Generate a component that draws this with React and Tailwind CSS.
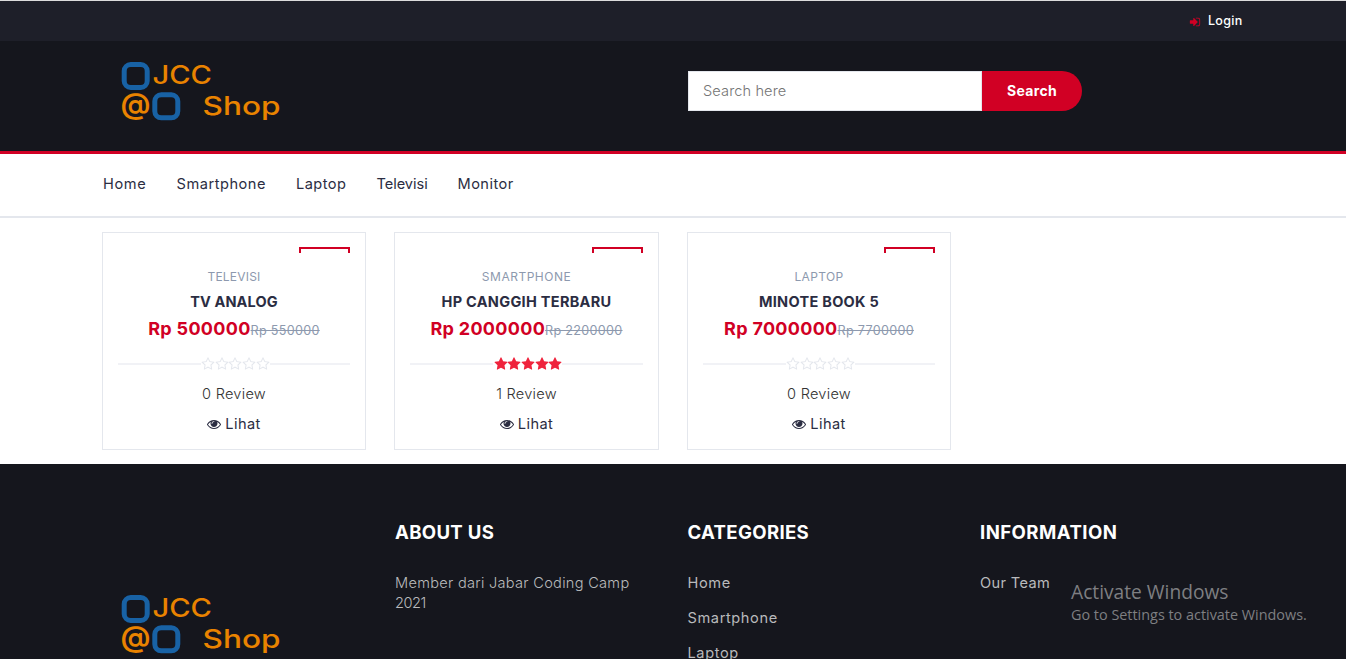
import React from "react";

const ICONS = {
  eye: "M1664 960q-152-236-381-353 61 104 61 225 0 185-131.5 316.5t-316.5 131.5-316.5-131.5-131.5-316.5q0-121 61-225-229 117-381 353 133 205 333.5 326.5t434.5 121.5 434.5-121.5 333.5-326.5zm-720-384q0-20-14-34t-34-14q-125 0-214.5 89.5t-89.5 214.5q0 20 14 34t34 14 34-14 14-34q0-86 61-147t147-61q20 0 34-14t14-34zm848 384q0 34-20 69-140 230-376.5 368.5t-499.5 138.5-499.5-139-376.5-368q-20-35-20-69t20-69q140-229 376.5-368t499.5-139 499.5 139 376.5 368q20 35 20 69z",
  star: "M1728 647q0 22-26 48l-363 354 86 500q1 7 1 20 0 50-41 50-19 0-40-12l-449-236-449 236q-22 12-40 12-21 0-31.5-14.5t-10.5-35.5q0-6 2-20l86-500-364-354q-25-27-25-48 0-37 56-46l502-73 225-455q19-41 49-41t49 41l225 455 502 73q56 9 56 46z",
  starOutline: "M1201 1004l306-297-422-62-189-382-189 382-422 62 306 297-73 421 378-199 377 199zm527-357q0 22-26 48l-363 354 86 500q1 7 1 20 0 50-41 50-19 0-40-12l-449-236-449 236q-22 12-40 12-21 0-31.5-14.5t-10.5-35.5q0-6 2-20l86-500-364-354q-25-27-25-48 0-37 56-46l502-73 225-455q19-41 49-41t49 41l225 455 502 73q56 9 56 46z",
  signIn: "M1312 896q0 26-19 45l-544 544q-19 19-45 19t-45-19-19-45v-288h-448q-26 0-45-19t-19-45v-384q0-26 19-45t45-19h448v-288q0-26 19-45t45-19 45 19l544 544q19 19 19 45zm352-352v704q0 119-84.5 203.5t-203.5 84.5h-320q-13 0-22.5-9.5t-9.5-22.5q0-4-1-20t-.5-26.5 3-23.5 10-19.5 20.5-6.5h320q66 0 113-47t47-113v-704q0-66-47-113t-113-47h-312l-11.5-1-11.5-3-8-5.5-7-9-2-13.5q0-4-1-20t-.5-26.5 3-23.5 10-19.5 20.5-6.5h320q119 0 203.5 84.5t84.5 203.5z",
};

function Icon({ name, size }) {
  return (
    <svg width={size} height={size} viewBox="0 0 1792 1792" fill="currentColor" className="block shrink-0">
      <path d={ICONS[name]} />
    </svg>
  );
}

const navItems = [
  { label: "Home", cls: "w-[43.5px] tracking-[0.6px]" },
  { label: "Smartphone", cls: "w-[89.5px] tracking-[0.52px]" },
  { label: "Laptop", cls: "w-[50.5px] tracking-[0.45px]" },
  { label: "Televisi", cls: "w-[51px] tracking-[-0.05px]" },
  { label: "Monitor", cls: "w-[56px] tracking-[0.45px]" },
];

const products = [
  { category: "TELEVISI", categoryCls: "tracking-[0.2px]", name: "TV ANALOG", nameCls: "tracking-[0.1px]", price: "Rp 500000", old: "Rp 550000", stars: 0, reviews: 0 },
  { category: "SMARTPHONE", categoryCls: "tracking-[0.5px]", name: "HP CANGGIH TERBARU", nameCls: "tracking-[0.3px]", price: "Rp 2000000", old: "Rp 2200000", stars: 5, reviews: 1 },
  { category: "LAPTOP", categoryCls: "tracking-[0.35px]", name: "MINOTE BOOK 5", nameCls: "tracking-[0.3px]", price: "Rp 7000000", old: "Rp 7700000", stars: 0, reviews: 0 },
];

function Logo() {
  return (
    <svg width="170" height="70" viewBox="0 0 170 70" className="block shrink-0" fontFamily="Inter, sans-serif" fill="#e98300">
      <g fill="none" stroke="#1862a5" strokeWidth="5">
        <rect x="6.2" y="8.5" width="23" height="23" rx="6.5" />
        <rect x="36.8" y="38.8" width="23" height="23" rx="6.5" />
      </g>
      <text x="34.5" y="28.2" fontSize="25" fontWeight="500" textLength="59.5" lengthAdjust="spacingAndGlyphs">JCC</text>
      <text x="2.5" y="58" fontSize="29" fontWeight="600" textLength="30" lengthAdjust="spacingAndGlyphs">@</text>
      <text x="84.6" y="59" fontSize="25.5" fontWeight="500" textLength="78" lengthAdjust="spacingAndGlyphs">Shop</text>
    </svg>
  );
}

function Card({ p }) {
  return (
    <div className="relative mx-[15px] flex h-[216px] flex-col items-center bg-white px-[15px] pt-[34px] text-[#2b2d42] shadow-[0_0_0_1px_#e4e7ed]">
      <div className="absolute right-[15px] top-[14px] h-[6px] w-[51px] border-2 border-b-0 border-[#d10024]" />
      <p className={"h-[21px] text-[12px] leading-[19px] text-[#8d99ae] " + p.categoryCls}>{p.category}</p>
      <h3 className={"h-[27px] whitespace-nowrap text-[14.5px] font-bold leading-[28px] " + p.nameCls}>{p.name}</h3>
      <div className="flex h-[27px] items-baseline whitespace-nowrap leading-[27px] tracking-[0.3px] text-[#d10024]">
        <span className="text-[18px] font-bold">{p.price}</span>
        <del className="text-[12.6px] text-[#8d99ae]">{p.old}</del>
      </div>
      <div className="mt-[11px] flex h-[22px] w-full items-center">
        <div className="h-[2px] w-[83px] bg-[#f1f2f6]" />
        <div className={"flex pb-px pl-[0.5px] " + (p.stars ? "text-[#ef233c]" : "text-[#e4e7ed]")}>
          {[0, 1, 2, 3, 4].map((i) => (
            <div key={i} className="flex w-[13.67px] justify-center">
              <Icon name={i < p.stars ? "star" : "starOutline"} size={14} />
            </div>
          ))}
        </div>
        <div className="h-[2px] flex-1 bg-[#f1f2f6]" />
      </div>
      <p className="mt-[9px] h-[20px] text-[14.6px] font-light leading-[20px] tracking-[0.25px] text-[#333333]">{p.reviews} Review</p>
      <a className="mt-[10px] flex h-[20px] items-center gap-[4px] text-[14.6px] leading-[20px] tracking-[0.4px]">
        <Icon name="eye" size={14} />
        <span>Lihat</span>
      </a>
    </div>
  );
}

export default function App() {
  return (
    <div className="flex h-[659px] w-[1346px] flex-col overflow-hidden bg-white font-[Inter,sans-serif] text-[14.6px]">
      <div className="flex h-[41px] shrink-0 items-center border-t border-[#dcdcdc] bg-[#1e1f29] pl-[1189px] pt-px text-[#d10024]">
        <Icon name="signIn" size={12} />
        <span className="ml-[7px] text-[12.5px] font-medium tracking-[0.3px] text-white">Login</span>
      </div>
      <header className="flex h-[113px] shrink-0 border-b-[3px] border-[#d10024] bg-[#15161d] pl-[118px]">
        <div className="pt-[15px]"><Logo /></div>
        <div className="ml-[400px] mt-[30px] flex h-[40px]">
          <div className="flex w-[294px] items-center border border-[#e4e7ed] bg-white pl-[14px] font-light leading-[20px] tracking-[0.1px] text-[#757575]">Search here</div>
          <button className="w-[100px] rounded-r-full bg-[#d10024] pb-[2px] text-[14px] font-bold tracking-[0.35px] text-white">Search</button>
        </div>
      </header>
      <nav className="flex h-[64px] shrink-0 items-center gap-[30px] border-b-2 border-[#e4e7ed] pb-[2px] pl-[103px] leading-[20px] text-[#2b2d42]">
        {navItems.map((n) => (
          <a key={n.label} className={"whitespace-nowrap " + n.cls}>{n.label}</a>
        ))}
      </nav>
      <main className="grid h-[246px] shrink-0 grid-cols-[292.5px_292.5px_292.5px_292.5px] pl-[87.75px] pt-[15px]">
        {products.map((p) => (
          <Card key={p.name} p={p} />
        ))}
      </main>
      <footer className="relative grid flex-1 grid-cols-[292.5px_292.5px_292.5px_292.5px] bg-[#15161d] pl-[88px] text-[#b9babc]">
        <div className="pl-[30px] pt-[125px]"><Logo /></div>
        <div className="pl-[14.5px] pt-[58px]">
          <h3 className="h-[22px] text-[18.6px] font-bold leading-[20px] tracking-[0.3px] text-white">ABOUT US</h3>
          <p className="mt-[29px] whitespace-nowrap font-light leading-[20px] tracking-[0.28px]">Member dari Jabar Coding Camp<br /><span className="tracking-[-0.5px]">2021</span></p>
        </div>
        <div className="pl-[14.5px] pt-[58px]">
          <h3 className="h-[22px] text-[18.6px] font-bold leading-[20px] tracking-[0.32px] text-white">CATEGORIES</h3>
          <ul className="mt-[29px] flex flex-col gap-[15px] leading-[20px] tracking-[0.6px]">
            <li>Home</li>
            <li>Smartphone</li>
            <li>Laptop</li>
          </ul>
        </div>
        <div className="pl-[14.5px] pt-[58px]">
          <h3 className="h-[22px] text-[18.6px] font-bold leading-[20px] tracking-[0.43px] text-white">INFORMATION</h3>
          <p className="mt-[29px] leading-[20px] tracking-[0.35px]">Our Team</p>
        </div>
        <div className="absolute left-[1071px] top-[115px] whitespace-nowrap font-['Open_Sans',sans-serif] text-[#7e7f82]">
          <div className="text-[19.2px] leading-[26px]">Activate Windows</div>
          <div className="text-[14.4px] leading-[19px]">Go to Settings to activate Windows.</div>
        </div>
        <div className="absolute bottom-0 left-0 flex h-px w-full bg-[#20343c]">
          <div className="ml-[46px] w-[344px] bg-[#dcdcdc]" />
          <div className="ml-[442px] w-[48px] bg-[#5c5d62]" />
        </div>
      </footer>
    </div>
  );
}
